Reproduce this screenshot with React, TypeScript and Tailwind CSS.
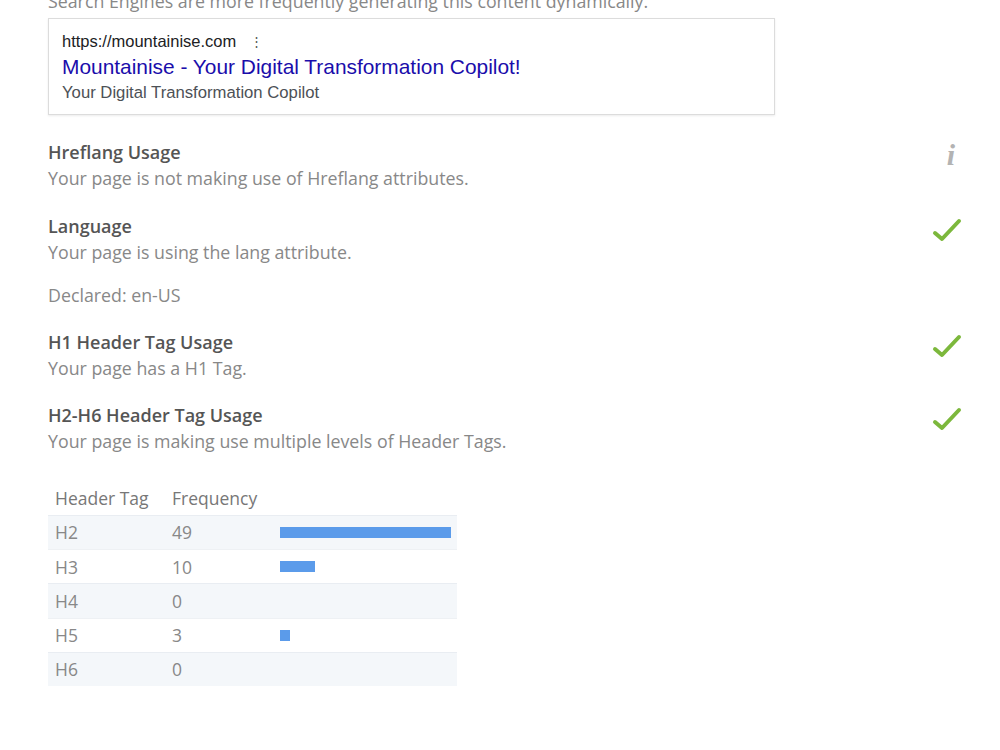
import React from "react";

const rows = [
  { tag: "H2", n: 49 },
  { tag: "H3", n: 10 },
  { tag: "H4", n: 0 },
  { tag: "H5", n: 3 },
  { tag: "H6", n: 0 },
];

function Check() {
  return (
    <svg width="30" height="26" viewBox="0 0 30 26" className="mt-[3px]">
      <polyline
        points="3,17 10,23 27,5"
        fill="none"
        stroke="#7cb83c"
        strokeWidth="4"
        strokeLinecap="round"
        strokeLinejoin="round"
      />
    </svg>
  );
}

function Info() {
  return (
    <span
      className="mr-[7px] mt-[-1px] text-[30px] leading-[34px] italic font-bold text-[#b3b3b3]"
      style={{ fontFamily: '"Liberation Serif", serif' }}
    >
      i
    </span>
  );
}

function Section({
  title,
  text,
  icon,
  children,
}: {
  title: string;
  text: string;
  icon?: React.ReactNode;
  children?: React.ReactNode;
}) {
  return (
    <div className="flex justify-between">
      <div>
        <div className="text-[18px] leading-[26px] font-semibold text-[#555]">{title}</div>
        <div className="text-[17.8px] leading-[26px] text-[#888]">{text}</div>
        {children}
      </div>
      <div className="flex w-[30px] justify-end">{icon}</div>
    </div>
  );
}

export default function App() {
  return (
    <div
      className="w-[1000px] h-[750px] overflow-hidden bg-white pl-[48px] pr-[38px]"
      style={{ fontFamily: '"Open Sans", "Noto Sans", sans-serif' }}
    >
      <div className="mt-[-12px] text-[17.8px] leading-[26px] text-[#888] whitespace-nowrap">
        Search Engines are more frequently generating this content dynamically.
      </div>
      <div
        className="mt-[4px] w-[727px] h-[97px] border border-[#dcdcdc] shadow-[0_1px_2px_rgba(0,0,0,0.08)] pl-[13px] pt-[10px]"
        style={{ fontFamily: '"Liberation Sans", Arial, sans-serif' }}
      >
        <div className="flex items-center text-[16.5px] leading-[25px] text-[#202124]">
          https://mountainise.com
          <span className="ml-[14px] text-[13px] text-[#555]">⋮</span>
        </div>
        <div className="text-[20.9px] leading-[25px] text-[#1a0dab]">
          Mountainise - Your Digital Transformation Copilot!
        </div>
        <div className="pt-[1px] text-[16.7px] leading-[25px] text-[#4d5156]">Your Digital Transformation Copilot</div>
      </div>

      <div className="mt-[24px]">
        <Section title="Hreflang Usage" text="Your page is not making use of Hreflang attributes." icon={<Info />} />
      </div>
      <div className="mt-[22px]">
        <Section title="Language" text="Your page is using the lang attribute." icon={<Check />}>
          <div className="mt-[17px] text-[17.8px] leading-[26px] text-[#888]">Declared: en-US</div>
        </Section>
      </div>
      <div className="mt-[21px]">
        <Section title="H1 Header Tag Usage" text="Your page has a H1 Tag." icon={<Check />} />
      </div>
      <div className="mt-[21px]">
        <Section
          title="H2-H6 Header Tag Usage"
          text="Your page is making use multiple levels of Header Tags."
          icon={<Check />}
        />
      </div>

      <div className="mt-[27px] w-[409px] text-[17.5px] text-[#888]">
        <div className="flex h-[34px] items-center text-[#777]">
          <div className="w-[124px] pl-[7px]">Header Tag</div>
          <div className="w-[108px]">Frequency</div>
        </div>
        {rows.map((r, i) => (
          <div
            key={r.tag}
            className={
              i % 2 === 0
                ? "flex h-[34.2px] items-center bg-[#f4f7fa] border-t border-[#e9edf2]"
                : "flex h-[34.2px] items-center bg-white border-t border-[#eef1f4]"
            }
          >
            <div className="w-[124px] pl-[7px]">{r.tag}</div>
            <div className="w-[108px]">{r.n}</div>
            <div className="flex-1">
              {r.n > 0 && (
                <div className="h-[11px] bg-[#5b9bea]" style={{ width: `${(r.n / 49) * 171}px` }} />
              )}
            </div>
          </div>
        ))}
      </div>
    </div>
  );
}
